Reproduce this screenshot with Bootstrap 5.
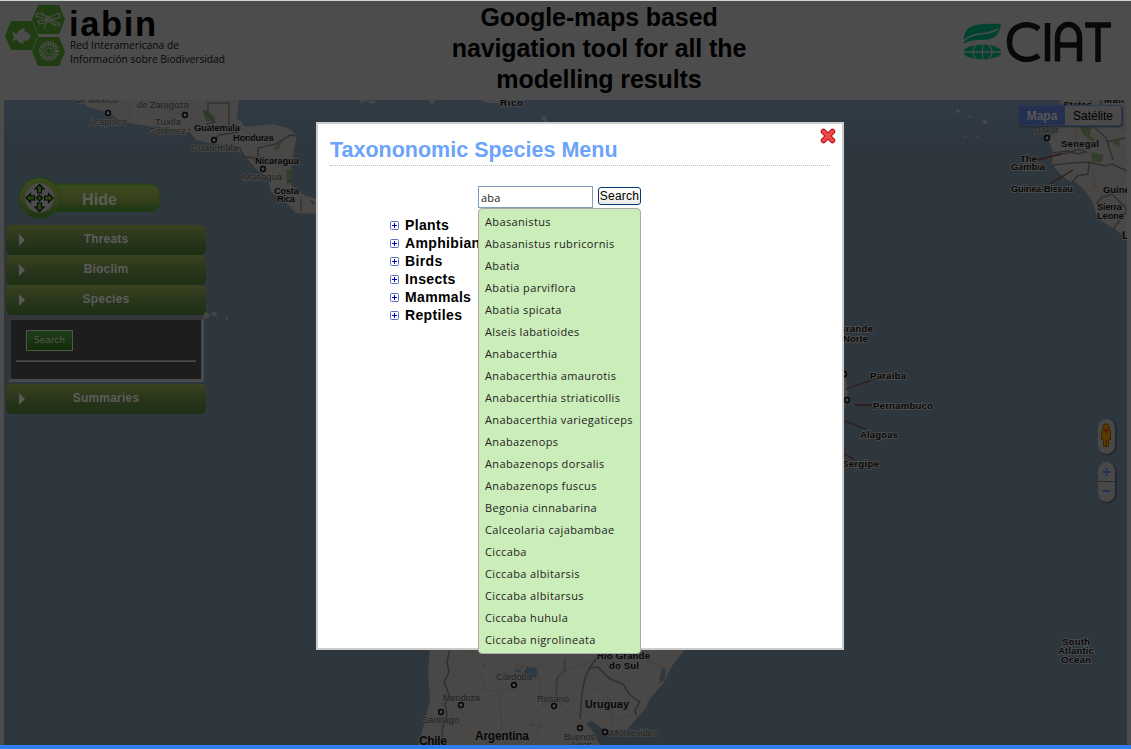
<!DOCTYPE html>
<html lang="en">
<head>
<meta charset="utf-8">
<title>IABIN species navigation</title>
<link href="https://cdn.jsdelivr.net/npm/bootstrap@5.3.0/dist/css/bootstrap.min.css" rel="stylesheet">
<style>
html,body{height:100%;overflow:hidden}
body{background:#4c4c4c;font-family:"Liberation Sans",Arial,sans-serif;color:#000;border-top:1px solid #cdd5d5;line-height:1.2}
.site-head{height:99px;padding:4px 5px 0 5px}
.site-title{width:330px;font-size:25px;line-height:31px;font-weight:700;letter-spacing:-.1px;margin:-3px 0 0;color:#000}
.left-col{width:429px}
.right-col{width:362px}
.map-area{height:645px;margin:0 4px;background:linear-gradient(#303b46 0,#2e373f 40px,#2e363e 62px)}
.map-svg{left:0;top:0}
.status-line{height:4px;background:#2f80ee}
.map-panel{width:200px;left:2px;top:77px}
.hide-ctl{height:43px;margin:0 0 5px 12px}
.acc-bar{height:30px;border-radius:5px;background:linear-gradient(#3a4220,#26341a 60%,#1d2f14);color:#5d5d5d;font-weight:700;font-size:12px;letter-spacing:.2px;padding-top:7px}
.acc-bar::before{content:"";position:absolute;left:13px;top:9px;border:solid transparent;border-width:6px 0 6px 6px;border-left-color:#595959}
.species-box{height:65px;width:196px;margin:2px 0 2px 2px;border:3px solid;border-color:#353535 #484848 #484848 #353535;background:#1d1d1d;padding:10px 5px 0 5px}
.mini-search{width:47px;height:21px;margin-left:10px;border:1px solid #4c5a4a;background:linear-gradient(#1e3c1c,#142c0a);color:#535b52;font:9px/19px "DejaVu Sans",sans-serif;padding:0}
.rule-line{height:2px;margin-top:9px;background:#4b4b4b;border-top:1px solid #3b3b3b}
.map-type{left:1014px;top:5px;height:21px;border:1px solid #2d3854;border-radius:3px;font-size:12px;line-height:20px;box-shadow:1px 1px 2px #20262d;background:#4a4a4a;width:104px}
.map-type .on{width:46px;background:#23304f;color:#575757;font-weight:700}
.map-controls{left:1094px;top:319px;width:18px}
.pill{border-radius:9px;background:#484848;box-shadow:1px 1px 2px #1a1f24}
.species-modal{left:312px;top:22px;width:528px;height:528px;background:#fff;border:2px solid #ccc;padding:13px 12px 0 12px}
.modal-head{font-size:21.5px;line-height:26px;font-weight:700;color:#6ca3fb;letter-spacing:0;margin:0;border-bottom:1px dotted #bbb;height:29px;width:500px}
.close-x{right:6px;top:4px;width:16px;height:16px;border:0;padding:0;background:none}
.search-row{margin:20px 0 0 148px;gap:5px}
.q-box{width:115px;height:22px;border:1px solid #7f9db9;padding:0 2px;font:11px "Open Sans",sans-serif;letter-spacing:.2px;color:#222;outline:0}
.q-btn{width:43px;height:18px;margin-top:1px;border:1px solid #003c74;border-radius:3px;background:linear-gradient(#fff,#ececE6);padding:0;font-size:12px;line-height:16px;color:#000;letter-spacing:.25px}
.tree{margin:8px 0 0 60px;font-size:14px;font-weight:700;line-height:18px;letter-spacing:.35px}
.tree li{gap:6px;height:18px}
.suggest{left:160px;top:84px;width:163px;height:446px;background:#cbedba;border:1px solid #aaa;border-radius:4px;padding:2px 0 0 6px;font:11px/22px "Open Sans",sans-serif;letter-spacing:.37px;color:#222}
.suggest li{height:22px;white-space:nowrap}
</style>
</head>
<body>
<header class="site-head d-flex justify-content-between">
  <div class="left-col">
    <svg class="overflow-visible" width="224" height="66" viewBox="5 5 224 66">
      <g fill="#203d11"><path d="M11 21H32L38 35.500L32 50H11L5 35.500z"/><path d="M38 5H59L65 19.500L59 34H38L32 19.500z"/><path d="M38 37H59L65 51.500L59 66H38L32 51.500z"/></g>
      <path d="M12 31l4 3c3-2 4-6 9-6l-1 3c4 1 6 3 7 6-2 3-5 4-8 4l1 3c-4 0-6-3-8-5l-4 3 2-5z" fill="#4c4c4c"/>
      <path d="M41 12l14 14M49 17L37 13l-1 3 12 4zM50 17l9-4 1 4-9 3zM47 20l-9 1 1 3 10-2M51 20l9 4-1 2-9-4zM47 19l-3 10" stroke="#4c4c4c" fill="none" stroke-width="1.200"/>
      <circle cx="49" cy="51" r="7.500" fill="none" stroke="#4c4c4c" stroke-width="5" stroke-dasharray="1.500 .9"/><circle cx="49" cy="51" r="3.300" fill="#203d11" stroke="#4c4c4c"/>
      <text x="69" y="35.500" font-family="Liberation Sans,sans-serif" font-size="34.500" font-weight="700" textLength="87">iabin</text>
      <g font-family="Open Sans,sans-serif" font-size="11.500" fill="#070707"><text x="70" y="49" textLength="109" lengthAdjust="spacingAndGlyphs">Red Interamericana de</text>
      <text x="70" y="63" textLength="155" lengthAdjust="spacingAndGlyphs">Información sobre Biodiversidad</text></g>
    </svg>
  </div>
  <h1 class="site-title text-center">Google-maps based navigation tool for all the modelling results</h1>
  <div class="right-col">
    <svg class="d-block" width="150" height="46" viewBox="962 20 150 46" style="margin:15px 0 0 198px">
      <path d="M964 44C963 27 970 23 1001 24C999 37 993 40 980 40C971 40 966 42 964 44z" fill="#004230"/>
      <path d="M964 41C972 31 985 37 998 29" stroke="#4c4c4c" stroke-width="1.500" fill="none"/>
      <ellipse cx="982.500" cy="52" rx="19" ry="7.500" fill="#004230"/>
      <path d="M963 52h39M982.500 44v16M977 44q-8 8 0 16M988 44q8 8 0 16" stroke="#4c4c4c" stroke-width="1.300" fill="none"/>
      <path d="M1039 29C1029 21 1009.500 24 1009.500 42S1029 63 1039 55.500" fill="none" stroke="#080808" stroke-width="5.500"/>
      <path d="M1047.500 23V61.500M1057.500 61.500V38C1057.500 20 1079.500 20 1079.500 38V61.500M1057.500 45H1079.500M1085 25H1111M1098 25V62" fill="none" stroke="#080808" stroke-width="5.500"/>
    </svg>
  </div>
</header>

<main class="map-area position-relative">
  <svg class="map-svg position-absolute" width="1123" height="645" viewBox="4 100 1123 645">
    <defs><clipPath id="mc"><rect x="4" y="100" width="1123" height="645"/></clipPath></defs>
    <g clip-path="url(#mc)">
    <g fill="#494846">
      <path d="M76 98L88 107L110 113L122 122L140 125L158 127L172 128L190 134L195 140L215 144L232 146L246 157L255 168L268 178L271 192L284 201L296 213L316 214V199L306 196L297 190L290 184L292 160L296 140L297 135L288 128L272 124L245 127L241 121L237 120L239 98z"/>
      <path d="M1061 98L1060 118L1056 130L1048 140L1053 151L1052 164L1060 174L1069 181L1077 183L1086 192L1093 203L1097 218L1113 228L1127 238V98z"/>
      <path d="M430 648L428 672L430 700L426 716L418 746H601L596 738L592 730L586 724L591 721L602 728L611 731L628 729L636 719L646 708L651 697L663 684L672 666L686 648z"/>
      <path d="M840 368L846 380L848 394L845 407L840 420z"/>
      <path d="M358 100l4 3 5-2 5 3 6-3zM429 100l3 5 4-5zM480 100l8 3 18 0v-3zM541 118l3 4h4l-4-7zM205 311l5 4-3 4-4-1z"/>
      <path d="M211 313l4-1 3 3-5 1zM225 319l3-3 1 1-3 3zM212 301l1 2zM955 110l4-1 1 3-3 1zM967 116l4 0 0 2zM983 120h2v2h-2zM984 121h3v3h-3zM974 133l4 3-1 2zM963 135l4 1-2 2z"/>
    </g>
    <g fill="#333f2b"><path d="M203 113l4-3 8 7-1 5-8-1zM274 148l8-9-2 9-6 3zM286 170l6-1v10l-5 6zM188 127l3 3-3 1zM1091 152l12 3-1 7-10-1zM1080 127l12-1-2 10 6 3-5 2-8-7zM1112 142l8-2-1 8z"/></g>
    <g fill="none" stroke="#2f3032" stroke-width="1.500">
      <path d="M203 110L215 122L207 124V129M208 113V103H229V130L235 132M188 132l7 8M214 140l5-5 20-3M225 145l15 3 4 9 14 1v-10l18-4 14-9 7 1M287 183l4-3M301 199v12M311 200l3 4"/>
      <path d="M450 648L447 662L449 672L444 682L449 694L445 704L447 714L442 730L444 746M597 658L590 667L585 678L582 692L580 719M590 668L598 667L610 679L623 684L630 695L640 702L635 710L636 715"/>
      <path d="M1053 153L1068 151L1077 154L1086 152L1079 149L1068 153L1055 155M1053 165L1072 163L1089 162L1088 174L1077 176L1072 183M1089 162L1105 166L1112 164L1127 171M1094 127L1106 138L1113 160M1106 142L1125 138M1101 99V111M1086 107l5-6M1104 197l8-3 13 13 2 4M1113 229l13-17M1096 204l7-8"/>
    </g>
    <g fill="none" stroke="#3d3e3e" stroke-width=".8" stroke-dasharray="5 1.500">
      <path d="M125 100l5 10-3 10M157 105l17 9 18-5M165 128v-8l10-6M226 100l3 12M240 128l15 9 12-4 8-6M252 160l12-3 11 3"/>
      <path d="M465 650l13 20 6 12-3 8 18 1 3 37-9 17M500 690h12l6-24 20 1 3 33M538 667l14-16M531 724l14-24 16-10M555 700l20 18M524 725h18l-12 20M470 725l-13-20-9 5M562 672l20-7 15-3M590 690l12-3 8 14 13 3M600 710l11-9v25M610 720l25-5M645 660l20 8"/>
      <path d="M1064 118l14 8-4 20M1064 172l6-5M1092 170l4 20 8 6M1090 190l10-14 13-4M1110 178l13 10M1115 103l-10 16 22 13M1071 100l-5 13M1100 222l13-18"/>
    </g>
    <g fill="none" stroke="#2f3942" stroke-width="1.500"><path d="M526 670l2-3M484 666v-3M515 670l5 2 0-3M565 658v12l-8 8-1 18"/><path d="M524 672l5-4 7 1v8h-8zM662 669l3 1-1 9-4 3z" fill="#2f3942"/></g>
    <g stroke="#30191a" stroke-width="1.300"><path d="M1037 160L1061 154M1050 184L1073 170M846 389L875 379M855 405H872M845 421L866 429M843 453L855 460"/></g>
    <g fill="#4c4c4c" stroke="#050505" stroke-width="1.500"><circle cx="108" cy="113" r="2.400"/><circle cx="185" cy="115" r="2.400"/><circle cx="214" cy="140" r="2.400"/><circle cx="263" cy="169" r="2.400"/><circle cx="1047" cy="138" r="2.400"/><circle cx="844" cy="374" r="2.400"/><circle cx="847" cy="400" r="2.400"/><circle cx="514" cy="685" r="2.400"/><circle cx="461" cy="705" r="2.400"/><circle cx="441" cy="712" r="2.400"/><circle cx="554" cy="706" r="2.400"/><circle cx="580" cy="728" r="2.400"/><circle cx="605" cy="732" r="2.400"/></g>
    <g font-family="Liberation Sans,Arial,sans-serif" font-size="9.500" fill="#202020" stroke="#4b4b4a" stroke-width="1.500" paint-order="stroke">
      <text x="75" y="102.500" textLength="43">de México</text><text x="137" y="107.500" textLength="52">de Zaragoza</text><text x="88" y="124.500" textLength="39">Acapulco</text><text x="155" y="125" textLength="26">Tuxtla</text><text x="148" y="134" textLength="38">Gutiérrez</text><text x="191" y="151" textLength="47">Guatemala</text><text x="243" y="180" textLength="39">Managua</text>
      <text x="496" y="680" textLength="36">Córdoba</text><text x="443" y="700.500" textLength="37">Mendoza</text><text x="422" y="723" textLength="37">Santiago</text><text x="537" y="701.500" textLength="32">Rosario</text><text x="564" y="739.500" textLength="31">Buenos</text><text x="570" y="748" textLength="22">Aires</text><text x="610" y="735.500" textLength="48">Montevideo</text><text x="1034" y="133" textLength="25">Dakar</text>
    </g>
    <g font-family="Liberation Sans,Arial,sans-serif" font-size="9.700" font-weight="700" fill="#080808" stroke="#4b4b4a" stroke-width="1.800" paint-order="stroke">
      <text x="194" y="131" textLength="46">Guatemala</text><text x="233" y="141" textLength="41">Honduras</text><text x="255" y="164" textLength="44">Nicaragua</text><text x="274" y="193.500" textLength="25">Costa</text><text x="277" y="201.500" textLength="18">Rica</text><text x="500" y="106" textLength="23">Rico</text>
      <text x="1063" y="108" textLength="29">States</text><text x="1104" y="103" textLength="20">Mali</text><text x="1061" y="147" textLength="38">Senegal</text><text x="1020" y="162" textLength="17">The</text><text x="1011" y="170" textLength="34">Gambia</text><text x="1011" y="192" textLength="62">Guinea-Bissau</text><text x="1103" y="193" textLength="32">Guinea</text><text x="1097" y="210" textLength="25">Sierra</text><text x="1097" y="219" textLength="27">Leone</text><text x="1122" y="239" font-size="11">Liberia</text>
      <text x="838" y="332" textLength="35">Grande</text><text x="843" y="342" textLength="25">Norte</text><text x="870" y="378.500" textLength="36">Paraíba</text><text x="873" y="408.500" textLength="60">Pernambuco</text><text x="860" y="437.500" textLength="38">Alagoas</text><text x="842" y="467" textLength="37">Sergipe</text>
      <text x="597" y="658.500" textLength="53">Rio Grande</text><text x="609" y="668.500" textLength="30">do Sul</text><text x="585" y="708" textLength="44" font-size="11">Uruguay</text><text x="475" y="740" textLength="54" font-size="12">Argentina</text><text x="419" y="745" textLength="28" font-size="12">Chile</text>
      <g fill="#070913"><text x="1062" y="644.500" textLength="28">South</text><text x="1058" y="653.500" textLength="36">Atlantic</text><text x="1061" y="662.500" textLength="30">Ocean</text></g>
    </g></g>
  </svg>

  <div class="map-panel position-absolute">
    <div class="hide-ctl">
      <svg class="d-block" width="145" height="43" viewBox="18 177 145 43">
        <defs><linearGradient id="hg" x2="0" y2="1"><stop stop-color="#394a1d"/><stop offset=".5" stop-color="#3a421c"/><stop offset="1" stop-color="#1b3512"/></linearGradient></defs>
        <rect x="30" y="184" width="130" height="27.500" rx="10" fill="url(#hg)" stroke="#1c4115"/><circle cx="39.500" cy="198" r="20.500" fill="url(#hg)" stroke="#1c4115"/>
        <circle cx="39.500" cy="198" r="14.500" fill="#4c4c4c"/>
        <g fill="#28470f" stroke="#050505" stroke-width="1.100"><path id="ar" d="M39.500 184.500l4.500 4.500h-2.500v4h-4v-4h-2.500z"/><use href="#ar" transform="rotate(90 39.500 198)"/><use href="#ar" transform="rotate(180 39.500 198)"/><use href="#ar" transform="rotate(270 39.500 198)"/><path d="M39.500 195l3 3-3 3-3-3z"/></g>
        <text x="82" y="205" font-family="Liberation Sans,sans-serif" font-weight="700" font-size="16" fill="#5c5e58" textLength="35">Hide</text>
      </svg>
    </div>
    <div class="acc-bar position-relative text-center">Threats</div>
    <div class="acc-bar position-relative text-center">Bioclim</div>
    <div class="acc-bar position-relative text-center">Species</div>
    <div class="species-box">
      <button class="mini-search d-block">Search</button>
      <div class="rule-line"></div>
    </div>
    <div class="acc-bar position-relative text-center">Summaries</div>
  </div>

  <div class="map-type position-absolute d-flex text-center"><div class="on">Mapa</div><div class="flex-fill">Satélite</div></div>

  <div class="map-controls position-absolute d-flex flex-column gap-2">
    <svg class="pill d-block" width="17" height="35" viewBox="0 0 17 35"><g fill="#593b02" stroke="#3c2302"><path d="M3.500 12.500q0-2 2-2h5q2 0 2 2v8h-2v7h-5v-7h-2z"/><circle cx="8" cy="8" r="3.200"/><path d="M8 21v6"/></g><path d="M5.500 11h5l-2.500 4z" fill="#571909"/></svg>
    <svg class="pill d-block" width="17" height="40" viewBox="0 0 17 40"><path d="M0 19.500h17" stroke="#2c2c2c"/><path d="M4.500 10h8M8.500 6v8M4.500 29h8" stroke="#243252" stroke-width="2"/></svg>
  </div>

  <section class="species-modal position-absolute">
    <h2 class="modal-head">Taxononomic Species Menu</h2>
    <button class="close-x position-absolute" aria-label="Close"><svg class="d-block" width="16" height="16" viewBox="0 0 16 16"><path d="M3.500 3.500l9 9M12.500 3.500l-9 9" stroke="#b51217" stroke-width="5.500" stroke-linecap="round"/><path d="M3.500 3.500l9 9M12.500 3.500l-9 9" stroke="#ee4a4c" stroke-width="3.300" stroke-linecap="round"/></svg></button>
    <div class="search-row d-flex"><input class="q-box" value="aba"><button class="q-btn">Search</button></div>
    <ul class="tree list-unstyled" id="tree"></ul>
    <ul class="suggest list-unstyled position-absolute" id="suggest"></ul>
  </section>
</main>
<div class="status-line"></div>
<script>
const plus='<svg width="9" height="9" viewBox="0 0 9 9"><rect x=".5" y=".5" width="8" height="8" rx="1" fill="#fff" stroke="#5a6fc0"/><path d="M2 4.500h5M4.500 2v5" stroke="#0000c8"/></svg>';
document.getElementById('tree').innerHTML=['Plants','Amphibians','Birds','Insects','Mammals','Reptiles'].map(t=>`<li class="d-flex align-items-center">${plus}<span>${t}</span></li>`).join('');
document.getElementById('suggest').innerHTML=['Abasanistus','Abasanistus rubricornis','Abatia','Abatia parviflora','Abatia spicata','Alseis labatioides','Anabacerthia','Anabacerthia amaurotis','Anabacerthia striaticollis','Anabacerthia variegaticeps','Anabazenops','Anabazenops dorsalis','Anabazenops fuscus','Begonia cinnabarina','Calceolaria cajabambae','Ciccaba','Ciccaba albitarsis','Ciccaba albitarsus','Ciccaba huhula','Ciccaba nigrolineata'].map(t=>`<li>${t}</li>`).join('');
</script>
<script src="https://cdn.jsdelivr.net/npm/bootstrap@5.3.0/dist/js/bootstrap.bundle.min.js"></script>
</body>
</html>
